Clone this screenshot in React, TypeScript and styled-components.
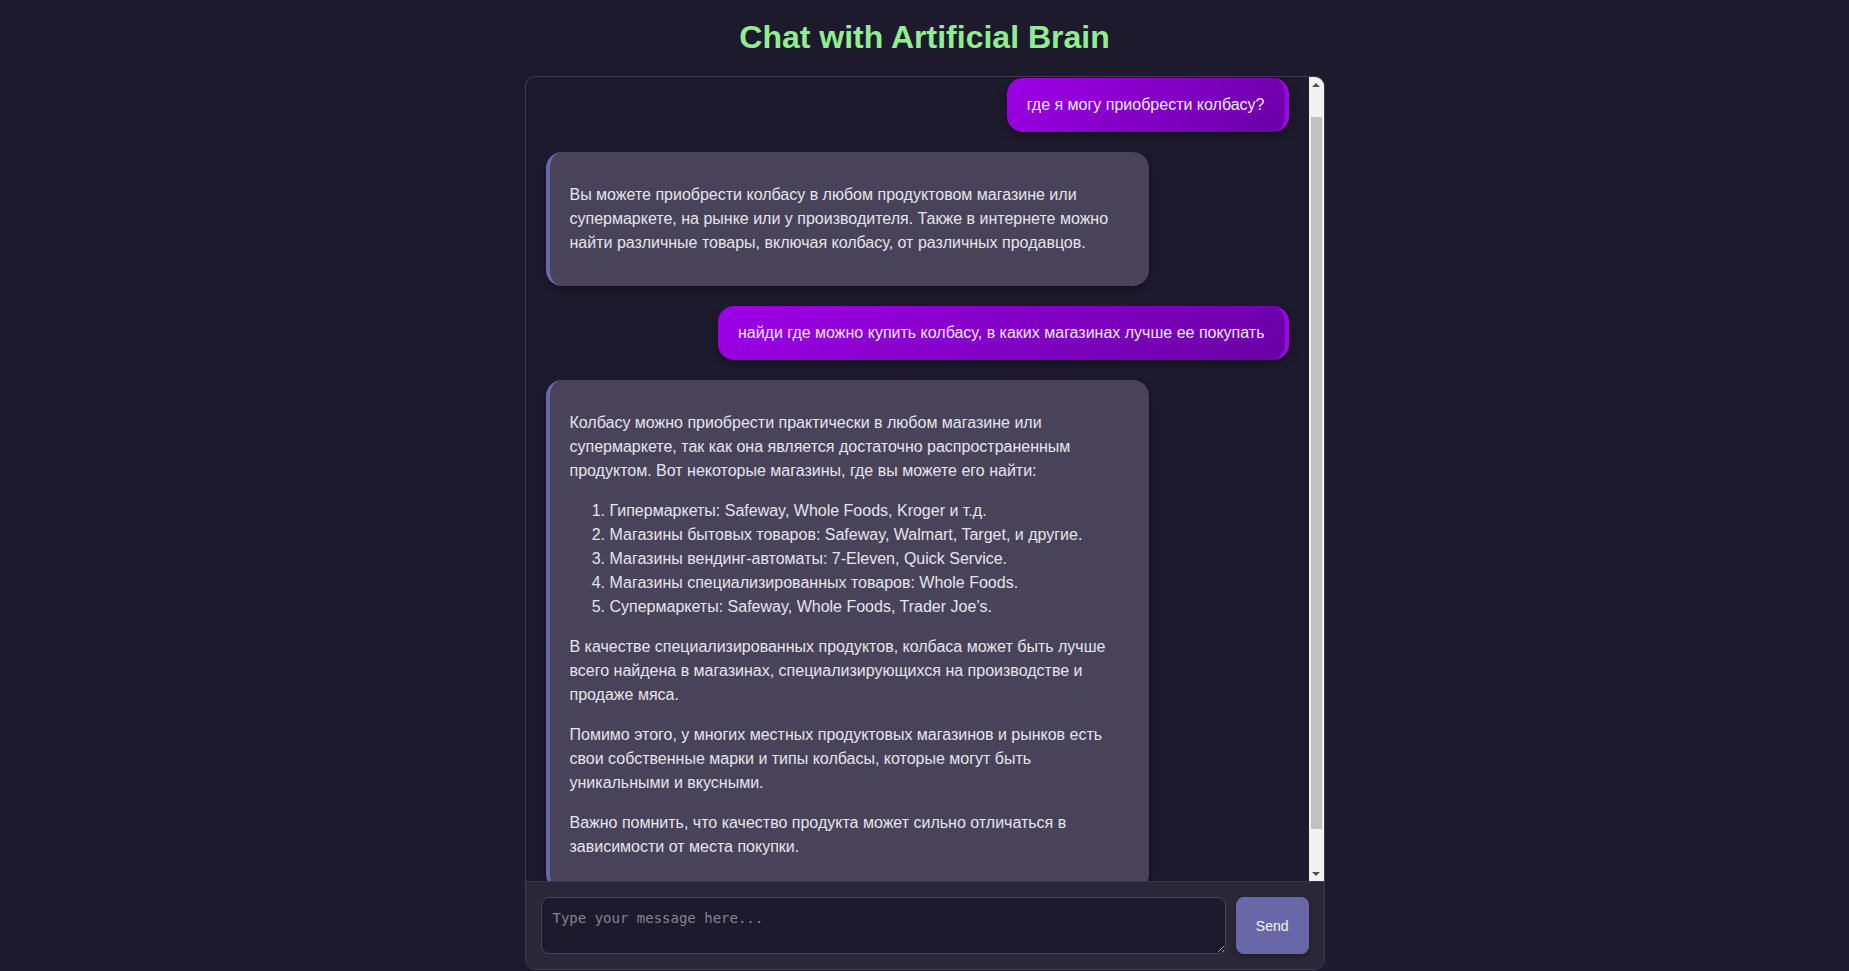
import React, { useLayoutEffect, useRef } from "react";
import styled, { createGlobalStyle } from "styled-components";

const GlobalStyle = createGlobalStyle`
  html, body {
    margin: 0;
    padding: 0;
    background: #1e1a2e;
    font-family: "Liberation Sans", Arial, sans-serif;
    overflow: hidden;
  }
  * { box-sizing: border-box; }
`;

const Page = styled.div`
  display: flex;
  flex-direction: column;
  align-items: center;
  height: 100vh;
`;

const Title = styled.h1`
  margin: 19px 0 20px;
  font-size: 32px;
  font-weight: bold;
  line-height: normal;
  color: #90ee90;
  font-family: "Liberation Sans", Arial, sans-serif;
`;

const ChatBox = styled.div`
  width: 800px;
  height: 894px;
  display: flex;
  flex-direction: column;
  border: 1px solid #3f3c52;
  border-radius: 10px;
  overflow: hidden;
  background: #1e1a2e;
`;

const ScrollRow = styled.div`
  flex: 1;
  min-height: 0;
  display: flex;
`;

const Messages = styled.div`
  flex: 1;
  min-width: 0;
  overflow: hidden;
  padding: 20px;
  display: flex;
  flex-direction: column;
`;

const ScrollBar = styled.div`
  width: 15px;
  flex-shrink: 0;
  display: flex;
  flex-direction: column;
  background: #f1f1f1;
`;

const ScrollButton = styled.div<{ $down?: boolean }>`
  height: 15px;
  flex-shrink: 0;
  display: flex;
  align-items: center;
  justify-content: center;

  &::after {
    content: "";
    width: 0;
    height: 0;
    border-left: 4px solid transparent;
    border-right: 4px solid transparent;
    ${(p) =>
      p.$down ? "border-top: 4px solid #505050;" : "border-bottom: 4px solid #505050;"}
  }
`;

const Track = styled.div`
  flex: 1;
  padding: 25px 2px 0;
`;

const Thumb = styled.div`
  height: 712px;
  background: #c1c1c1;
`;

const UserBubble = styled.div`
  align-self: flex-end;
  flex-shrink: 0;
  margin: 10px 0;
  padding: 15px 20px;
  border-radius: 16px;
  border-right: 4px solid #a200f0;
  background: linear-gradient(135deg, #9d00e6 0%, #6a00a6 100%);
  color: #f1e8ff;
  font-size: 16px;
  line-height: 24px;
  box-shadow: 0 4px 10px rgba(0, 0, 0, 0.35);
`;

const BotBubble = styled.div`
  align-self: flex-start;
  flex-shrink: 0;
  width: 603px;
  margin: 10px 0;
  padding: 15px 20px;
  border-radius: 16px;
  border-left: 4px solid #6a66ac;
  background: #484359;
  color: #e6e4ee;
  font-size: 16px;
  line-height: 24px;
  box-shadow: 0 4px 10px rgba(0, 0, 0, 0.35);

  p {
    margin: 16px 0;
  }
  ol {
    margin: 16px 0;
    padding-left: 40px;
  }
`;

const InputBar = styled.div`
  display: flex;
  gap: 10px;
  padding: 15px;
  border-top: 1px solid #3a374d;
  background: #2a2738;
`;

const TextInput = styled.textarea`
  flex: 1;
  height: 57px;
  padding: 12px 11px 10px;
  border: 1px solid #46435a;
  border-radius: 8px;
  background: #1e1a2e;
  color: #e0e0e0;
  font-family: "DejaVu Sans Mono", monospace;
  font-size: 14px;
  outline: none;

  &::placeholder {
    color: #85838f;
  }
`;

const SendButton = styled.button`
  padding: 0 20px;
  border: none;
  border-radius: 8px;
  background: #6a67a9;
  color: #f4f4fa;
  font-family: "Liberation Sans", Arial, sans-serif;
  font-size: 14px;
  cursor: pointer;
  box-shadow: 0 2px 6px rgba(0, 0, 0, 0.3);
`;

export default function App() {
  const ref = useRef<HTMLDivElement>(null);
  useLayoutEffect(() => {
    if (ref.current) ref.current.scrollTop = 29;
  }, []);

  return (
    <Page>
      <GlobalStyle />
      <Title>Chat with Artificial Brain</Title>
      <ChatBox>
        <ScrollRow>
          <Messages ref={ref}>
            <UserBubble>где я могу приобрести колбасу?</UserBubble>
            <BotBubble>
              <p>
                Вы можете приобрести колбасу в любом продуктовом магазине или супермаркете, на рынке
                или у производителя. Также в интернете можно найти различные товары, включая колбасу,
                от различных продавцов.
              </p>
            </BotBubble>
            <UserBubble>найди где можно купить колбасу, в каких магазинах лучше ее покупать</UserBubble>
            <BotBubble>
              <p>
                Колбасу можно приобрести практически в любом магазине или супермаркете, так как она
                является достаточно распространенным продуктом. Вот некоторые магазины, где вы можете
                его найти:
              </p>
              <ol>
                <li>Гипермаркеты: Safeway, Whole Foods, Kroger и т.д.</li>
                <li>Магазины бытовых товаров: Safeway, Walmart, Target, и другие.</li>
                <li>Магазины вендинг-автоматы: 7-Eleven, Quick Service.</li>
                <li>Магазины специализированных товаров: Whole Foods.</li>
                <li>Супермаркеты: Safeway, Whole Foods, Trader Joe’s.</li>
              </ol>
              <p>
                В качестве специализированных продуктов, колбаса может быть лучше всего найдена в
                магазинах, специализирующихся на производстве и продаже мяса.
              </p>
              <p>
                Помимо этого, у многих местных продуктовых магазинов и рынков есть свои собственные
                марки и типы колбасы, которые могут быть уникальными и вкусными.
              </p>
              <p>
                Важно помнить, что качество продукта может сильно отличаться в зависимости от места
                покупки.
              </p>
            </BotBubble>
          </Messages>
          <ScrollBar>
            <ScrollButton />
            <Track>
              <Thumb />
            </Track>
            <ScrollButton $down />
          </ScrollBar>
        </ScrollRow>
        <InputBar>
          <TextInput placeholder="Type your message here..." />
          <SendButton>Send</SendButton>
        </InputBar>
      </ChatBox>
    </Page>
  );
}
